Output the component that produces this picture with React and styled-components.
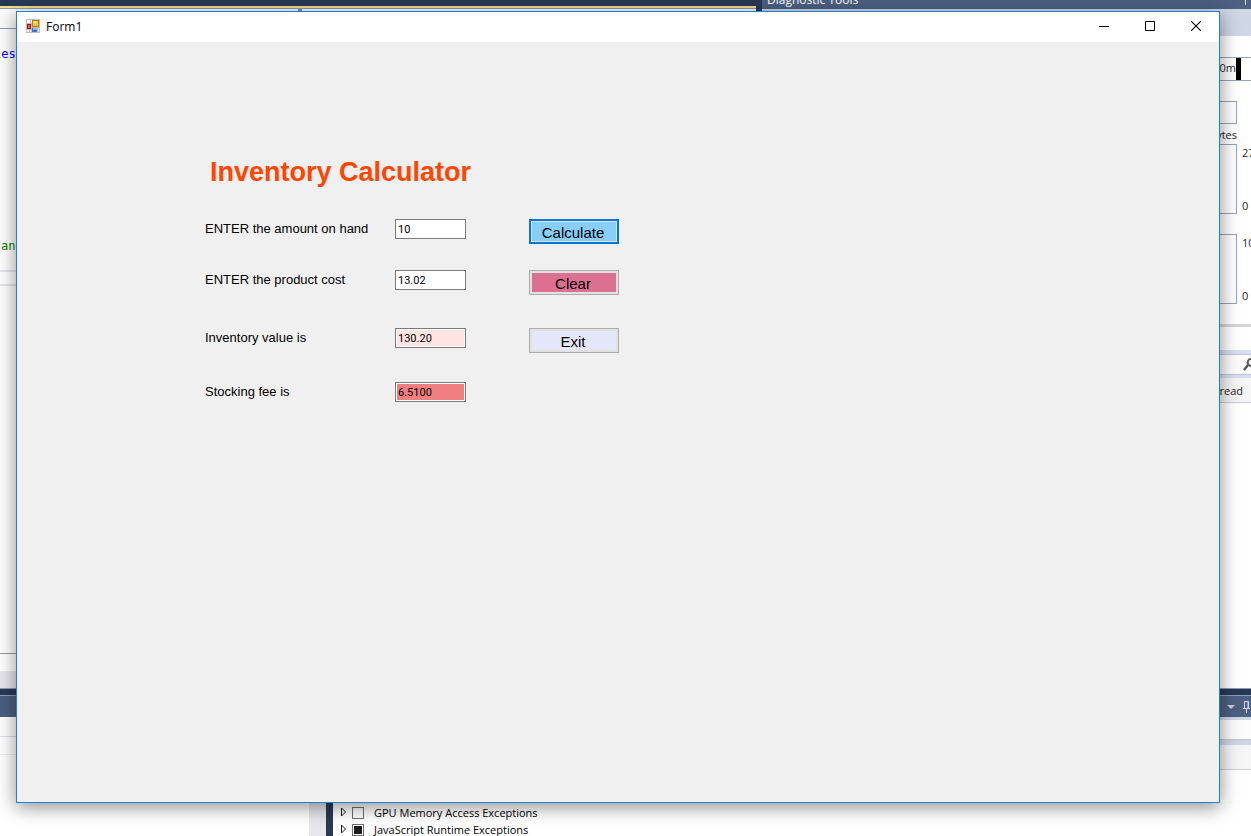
import React, { useState } from "react";
import styled, { createGlobalStyle } from "styled-components";

const GlobalStyle = createGlobalStyle`
  *, *::before, *::after { box-sizing: border-box; }
  body { margin: 0; font-family: "Open Sans", "Noto Sans", sans-serif; font-size: 11px; color: #1e1e1e; }
  button, input { font: inherit; margin: 0; }
`;

const Desktop = styled.div`
  position: relative;
  min-height: 100vh;
  overflow: hidden;
  display: flex;
  flex-direction: column;
  background: #293955;
`;

const UpperArea = styled.div`
  flex: 1;
  display: flex;
  gap: 6px;
`;

const Editor = styled.section`
  flex: 1;
  min-width: 0;
  margin-top: 6px;
  border-top: 2px solid #f5e08c;
  display: flex;
  flex-direction: column;
  background: #fff;
`;

const EditorNav = styled.div`
  height: 21px;
  border-top: 1px solid #8e9bbc;
  border-bottom: 1px solid #8e9bbc;
  background: #fcfcfc;
`;

const NavSplit = styled.div`
  height: 3px;
  width: 4px;
  margin-left: 298px;
  background: #868999;
`;

const CodeBlock = styled.div`
  height: ${(p) => p.$height}px;
  padding-top: ${(p) => p.$top}px;
  border-bottom: 2px solid #e6e6ea;
`;

const CodeLine = styled.code`
  display: block;
  width: 40px;
  text-indent: ${(p) => (p.$scrolled ? "-6px" : "1px")};
  overflow: hidden;
  line-height: 16px;
  font-family: "DejaVu Sans Mono", monospace;
  font-size: 12px;
  color: ${(p) => p.$color};
`;

const CodeGap = styled.div`
  height: 176px;
`;

const EditorRest = styled.div`
  flex: 1;
  border-bottom: 1px solid #999;
`;

const EditorStatus = styled.div`
  height: 34px;
  border-bottom: 17px solid #e8e8ec;
`;

const Tools = styled.section`
  width: 489px;
  display: flex;
  flex-direction: column;
  background: #fff;
`;

const ToolsHeader = styled.header`
  height: 9px;
  padding-left: 5px;
  overflow: hidden;
  display: flex;
  align-items: flex-end;
  justify-content: space-between;
  background: #4d6082;
  color: #fff;
  font-size: 12px;
  line-height: 18px;
`;

const HeaderTick = styled.span`
  width: 1px;
  height: 5px;
  margin: 0 5px 4px 0;
  background: #cfd6e5;
`;

const ToolsBar = styled.div`
  height: 27px;
  background: #cfd6e5;
`;

const Timeline = styled.div`
  height: 24px;
  margin-top: 21px;
  display: flex;
  justify-content: flex-end;
  border: solid #96a3b7;
  border-width: 1px 0;
  line-height: 19px;
`;

const TimelineMark = styled.span`
  width: 5px;
  margin-right: 10px;
  background: #000;
`;

const EventTrack = styled.div`
  height: 23px;
  margin: 20px 14px 0 0;
  border: 1px solid #96a3b7;
`;

const UnitLabel = styled.div`
  height: 20px;
  padding-right: 14px;
  line-height: 22px;
  text-align: right;
`;

const ChartRow = styled.div`
  display: flex;
  height: 70px;
  margin-bottom: 20px;
`;

const Chart = styled.div`
  flex: 1;
  border: 1px solid #96a3b7;
`;

const Axis = styled.div`
  width: 14px;
  padding: 1px 0 0 5px;
  display: flex;
  flex-direction: column;
  justify-content: space-between;
  line-height: 16px;
`;

const Splitter = styled.div`
  height: 3px;
  background: #d4d5da;
`;

const SearchStrip = styled.div`
  height: 28px;
  margin-top: 23px;
  display: flex;
  justify-content: flex-end;
  align-items: center;
  border: solid #d6dff0;
  border-width: 4px 0 3px;
  background: #fcfcfc;
  box-shadow: inset 0 1px #c0c5d6, inset 0 -1px #c0c5d6;
`;

const ColumnHeader = styled.div`
  height: 25px;
  padding-right: 8px;
  border-bottom: 1px solid #ccceda;
  background: #f5f5f5;
  line-height: 26px;
  text-align: right;
`;

const LowerArea = styled.div`
  height: 148px;
  display: flex;
  flex-direction: column;
  border-top: 1px solid #8e9bbc;
`;

const PanelRow = styled.div`
  flex: 1;
  margin-top: 6px;
  display: flex;
  gap: 7px;
`;

const Panel = styled.section`
  display: flex;
  flex-direction: column;
  background: #fff;
  flex: ${(p) => (p.$wide ? "1" : "0 0 326px")};
`;

const PanelHeader = styled.header`
  height: 22px;
  display: flex;
  align-items: center;
  justify-content: flex-end;
  gap: 8px;
  border-top: 1px solid #8e9bbc;
  background: #4d6082;
`;

const OutputBody = styled.div`
  flex: 1;
  border-right: 17px solid #e8e8ec;
`;

const OutputLine = styled.div`
  height: ${(p) => p.$height}px;
  border-bottom: 1px solid ${(p) => p.$line};
`;

const PanelTool = styled.div`
  height: 23px;
  border: solid #cfd6e5;
  border-width: 3px 0 0;
  border-bottom: 1px solid #c0c5d6;
  background: #fcfcfc;
`;

const PanelTitleRow = styled.div`
  height: 30px;
  border-top: 5px solid #cfd6e5;
  border-bottom: 1px solid #ccceda;
  background: #f5f5f5;
`;

const Tree = styled.ul`
  list-style: none;
  margin: 34px 0 0;
  padding: 0 0 0 7px;
`;

const TreeRow = styled.li`
  height: 17px;
  display: flex;
  align-items: center;
  color: #000;
`;

const Expander = styled.button`
  width: 7px;
  height: 16px;
  margin-right: 5px;
  padding: 0;
  border: 0;
  background: none;
  display: flex;
  align-items: center;
`;

const TreeLabel = styled.label`
  display: flex;
  align-items: center;
  gap: 10px;
  line-height: 16px;
  white-space: nowrap;
`;

const TreeCheck = styled.input`
  appearance: none;
  width: 12px;
  height: 12px;
  border: 1px solid #707070;
  background: #fff;
  &:checked {
    background: #1e1e1e;
    box-shadow: inset 0 0 0 1px #fff;
  }
`;

const Window = styled.main`
  position: absolute;
  inset: 11px 31px 33px 16px;
  display: flex;
  flex-direction: column;
  border: 1px solid #1883d7;
  background: #f0f0f0;
  box-shadow: 0 4px 18px rgba(0, 0, 0, 0.45);
`;

const TitleBar = styled.header`
  height: 30px;
  padding: 0 0 2px 9px;
  display: flex;
  align-items: center;
  background: #fff;
  color: #000;
  font-size: 12px;
`;

const WindowTitle = styled.span`
  flex: 1;
  margin-left: 6px;
`;

const CaptionButton = styled.button`
  width: 46px;
  height: 28px;
  padding: 0;
  border: 0;
  background: none;
  display: flex;
  align-items: center;
  justify-content: center;
`;

const Form = styled.form`
  padding: 114px 0 0 188px;
  font-family: "Liberation Sans", Arial, sans-serif;
  font-size: 13px;
  color: #000;
`;

const Heading = styled.h1`
  margin: 0 0 31px;
  padding-left: 5px;
  font-size: 27px;
  line-height: 32px;
  font-weight: 700;
  color: #ff4500;
`;

const Fields = styled.div`
  display: grid;
  grid-template-columns: 190px 71px 90px;
  grid-template-rows: 51px 58px 54px 20px;
  align-items: start;
`;

const FieldLabel = styled.label`
  line-height: 20px;
`;

const Field = styled.input`
  width: 71px;
  height: 20px;
  padding: 0 1px;
  border: 1px solid #7a7a7a;
  border-radius: 0;
  outline: 0;
  background: ${(p) => p.$fill || "#fff"};
  box-shadow: inset 0 0 0 1px #fff;
  font-family: Roboto, "Liberation Sans", sans-serif;
  font-size: 11px;
  text-indent: 1px;
  color: #000;
`;

const FormButton = styled.button`
  grid-column: 3;
  grid-row: ${(p) => p.$row};
  width: 90px;
  height: 25px;
  margin-left: 63px;
  padding: 2px 2px 0 0;
  border: ${(p) => (p.$primary ? "2px solid #0078d7" : "1px solid #adadad")};
  background: ${(p) => p.$fill};
  box-shadow: inset 0 0 0 ${(p) => (p.$primary ? 1 : 2)}px #e1e1e1;
  font-size: 15px;
  line-height: 18px;
  color: #000;
`;

const FormIcon = () => (
  <svg width="14" height="14" viewBox="0 0 14 14" shapeRendering="crispEdges" aria-hidden="true">
    <path d="M0 0h14v14H0z" fill="#bdbdbd" />
    <path d="M1 1h3v3H1zM5 1h1v3H5zM1 11h2v2H1zM4 11h1v2H4zM12 10h1v3h-1z" fill="#fff" />
    <path d="M1 5h4v5H1z" fill="#9c1414" />
    <path d="M2 6h2v3H2z" fill="#e06a5c" />
    <path d="M6 1h7v7H6z" fill="#b57a08" />
    <path d="M7 2h5v5H7z" fill="#f7c52c" />
    <path d="M7 2h4v2H7z" fill="#ffe27a" />
    <path d="M6 9h5v4H6z" fill="#3f6fce" />
    <path d="M7 9h4v2H7z" fill="#86aef0" />
  </svg>
);

const TreeItem = ({ text, checked }) => (
  <TreeRow>
    <Expander type="button" aria-label={`Expand ${text}`}>
      <svg width="7" height="11" viewBox="0 0 7 11">
        <path d="M1.5 1v8l4-4z" fill="#fff" stroke="#1e1e1e" />
      </svg>
    </Expander>
    <TreeLabel>
      <TreeCheck type="checkbox" defaultChecked={checked} />
      {text}
    </TreeLabel>
  </TreeRow>
);

function Ide() {
  return (
    <>
      <UpperArea>
        <Editor>
          <EditorNav><NavSplit /></EditorNav>
          <CodeBlock $height={243} $top={17}>
            <CodeLine $color="#0000ff" $scrolled>les</CodeLine>
            <CodeGap />
            <CodeLine $color="#008000">and</CodeLine>
          </CodeBlock>
          <CodeBlock $height={14} $top={0} />
          <EditorRest />
          <EditorStatus />
        </Editor>
        <Tools>
          <ToolsHeader>Diagnostic Tools<HeaderTick /></ToolsHeader>
          <ToolsBar />
          <Timeline>0m<TimelineMark /></Timeline>
          <EventTrack />
          <UnitLabel>ytes</UnitLabel>
          <ChartRow>
            <Chart />
            <Axis><span>27</span><span>0</span></Axis>
          </ChartRow>
          <ChartRow>
            <Chart />
            <Axis><span>10</span><span>0</span></Axis>
          </ChartRow>
          <Splitter />
          <SearchStrip>
            <svg width="8" height="13" viewBox="0 0 8 13" aria-hidden="true">
              <path d="M1 12l4-5" stroke="#555" strokeWidth="2.4" />
              <circle cx="8" cy="4.5" r="3.4" fill="none" stroke="#555" strokeWidth="2" />
            </svg>
          </SearchStrip>
          <ColumnHeader>read</ColumnHeader>
        </Tools>
      </UpperArea>
      <LowerArea>
        <PanelRow>
          <Panel>
            <PanelHeader />
            <OutputBody>
              <OutputLine $height={20} $line="#dcdde8" />
              <OutputLine $height={18} $line="#eeeeee" />
            </OutputBody>
          </Panel>
          <Panel $wide>
            <PanelHeader>
              <svg width="8" height="4" viewBox="0 0 8 4"><path d="M0 0h8L4 4z" fill="#cfd0d3" /></svg>
              <svg width="8" height="12" viewBox="0 0 8 12" fill="none" stroke="#d5dae5">
                <path d="M1.5 7V.5h4V7M5 .5V7M0 7.5h7M3.5 7.5V12" />
              </svg>
            </PanelHeader>
            <PanelTool />
            <PanelTitleRow />
            <Tree>
              <TreeItem text="GPU Memory Access Exceptions" />
              <TreeItem text="JavaScript Runtime Exceptions" checked />
            </Tree>
          </Panel>
        </PanelRow>
      </LowerArea>
    </>
  );
}

export default function App() {
  const [amount, setAmount] = useState("10");
  const [cost, setCost] = useState("13.02");
  const [value, setValue] = useState("130.20");
  const [fee, setFee] = useState("6.5100");

  const calculate = (event) => {
    event.preventDefault();
    const total = Number(amount) * Number(cost);
    setValue(total.toFixed(2));
    setFee((total * 0.05).toFixed(4));
  };

  const clear = () => [setAmount, setCost, setValue, setFee].forEach((set) => set(""));

  return (
    <Desktop>
      <GlobalStyle />
      <Ide />
      <Window>
        <TitleBar>
          <FormIcon />
          <WindowTitle>Form1</WindowTitle>
          <CaptionButton type="button" aria-label="Minimize">
            <svg width="10" height="10" viewBox="0 0 10 10"><path d="M0 5.5h10" stroke="#000" /></svg>
          </CaptionButton>
          <CaptionButton type="button" aria-label="Maximize">
            <svg width="10" height="10" viewBox="0 0 10 10"><path d="M.5.5h9v9h-9z" fill="none" stroke="#000" /></svg>
          </CaptionButton>
          <CaptionButton type="button" aria-label="Close">
            <svg width="10" height="10" viewBox="0 0 10 10"><path d="M0 0l10 10M10 0L0 10" stroke="#000" strokeWidth="1.1" /></svg>
          </CaptionButton>
        </TitleBar>
        <Form onSubmit={calculate}>
          <Heading>Inventory Calculator</Heading>
          <Fields>
            <FieldLabel htmlFor="amount">ENTER the amount on hand</FieldLabel>
            <Field id="amount" value={amount} onChange={(e) => setAmount(e.target.value)} />
            <FormButton type="submit" $row={1} $primary $fill="#87cefa">Calculate</FormButton>
            <FieldLabel htmlFor="cost">ENTER the product cost</FieldLabel>
            <Field id="cost" value={cost} onChange={(e) => setCost(e.target.value)} />
            <FormButton type="button" $row={2} $fill="#db7093" onClick={clear}>Clear</FormButton>
            <FieldLabel htmlFor="value">Inventory value is</FieldLabel>
            <Field id="value" value={value} readOnly $fill="#ffe4e1" />
            <FormButton type="button" $row={3} $fill="#e6e6fa">Exit</FormButton>
            <FieldLabel htmlFor="fee">Stocking fee is</FieldLabel>
            <Field id="fee" value={fee} readOnly $fill="#f08080" />
          </Fields>
        </Form>
      </Window>
    </Desktop>
  );
}
